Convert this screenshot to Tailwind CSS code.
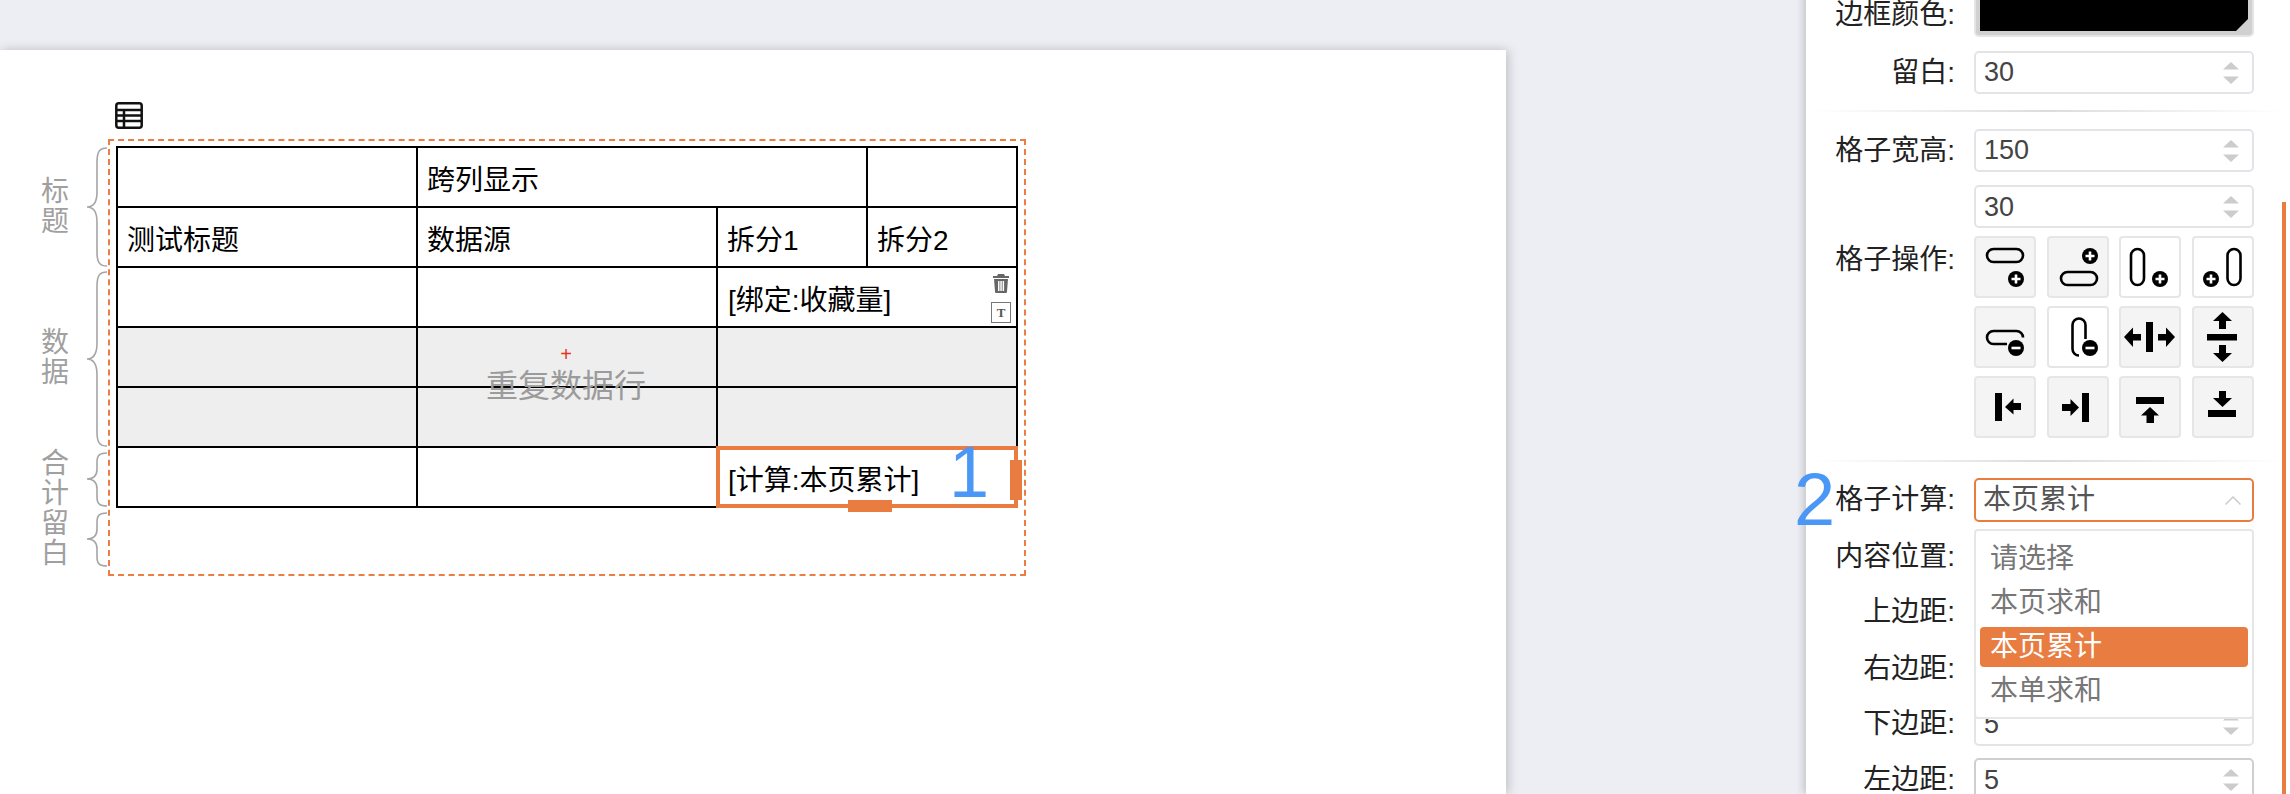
<!DOCTYPE html>
<html lang="zh-CN">
<head>
  <meta charset="UTF-8" />
  <title>报表设计</title>
  <script src="https://cdn.jsdelivr.net/npm/@tailwindcss/browser@4"></script>
</head>
<body class="bg-[#eceef3] h-[794px] overflow-hidden font-['Liberation_Sans','Noto_Sans_CJK_SC',sans-serif]">
<div class="flex h-[794px] relative overflow-hidden">

  <!-- 画布 -->
  <main class="w-[1506px] mt-[50px] bg-white shadow-[2px_0_10px_rgba(0,0,0,0.2)] shrink-0">
    <div class="pl-[115px] pt-[52px] h-[29px] box-content">
      <svg class="w-[28px] h-[27px]" viewBox="0 0 28 27" fill="none" stroke="#111" stroke-width="2.5">
        <rect x="1.3" y="1.3" width="25.4" height="24.4" rx="2.5"/>
        <path d="M1 8h26M1 13.500h26M1 19h26M9 8v18"/>
      </svg>
    </div>

    <div class="flex items-start mt-[8px]">
      <!-- 分区标注 -->
      <div class="w-[108px] mt-[8px] text-[#a0a0a0] text-[28px] leading-[30px] text-center">
        <div class="flex items-center h-[120px]">
          <div class="w-[86px] pl-[24px]">标<br>题</div>
          <svg class="w-[22px] h-[120px]" viewBox="0 0 22 120" fill="none" stroke="#a5a5a5" stroke-width="1.6">
            <path d="M21 1C14 1 11 4 11 15V45C11 55 7 60 1 60C7 60 11 65 11 75V105C11 116 14 119 21 119"/>
          </svg>
        </div>
        <div class="flex items-center h-[180px] pt-[4px]">
          <div class="w-[86px] pl-[24px] -mt-[2px]">数<br>据</div>
          <svg class="w-[22px] h-[176px]" viewBox="0 0 22 176" fill="none" stroke="#a5a5a5" stroke-width="1.6">
            <path d="M21 1C14 1 11 4 11 15V72C11 83 7 88 1 88C7 88 11 93 11 104V161C11 172 14 175 21 175"/>
          </svg>
        </div>
        <div class="flex items-center h-[60px] pt-[5px]">
          <div class="w-[86px] pl-[24px] -mt-[1px]">合<br>计</div>
          <svg class="w-[22px] h-[55px]" viewBox="0 0 22 55" fill="none" stroke="#a5a5a5" stroke-width="1.6">
            <path d="M21 1C14 1 11 3 11 10V17C11 24 7 27 1 27C7 27 11 30 11 37V45C11 52 14 54 21 54"/>
          </svg>
        </div>
        <div class="flex items-center h-[60px] pt-[5px]">
          <div class="w-[86px] pl-[24px] -mt-[1px]">留<br>白</div>
          <svg class="w-[22px] h-[55px]" viewBox="0 0 22 55" fill="none" stroke="#a5a5a5" stroke-width="1.6">
            <path d="M21 1C14 1 11 3 11 10V17C11 24 7 27 1 27C7 27 11 30 11 37V45C11 52 14 54 21 54"/>
          </svg>
        </div>
      </div>

      <!-- 表格 -->
      <div class="border-2 border-dashed border-[#ec7d43] w-[918px] h-[437px] pl-[6px] pt-[5px]">
        <div class="relative w-[902px]">
          <table class="table-fixed border-collapse w-[902px] text-[28px] leading-[36px] text-black">
            <colgroup>
              <col class="w-[300px]"><col class="w-[300px]"><col class="w-[150px]"><col class="w-[150px]">
            </colgroup>
            <tbody>
              <tr class="h-[60px]">
                <td class="border-2 border-black"></td>
                <td colspan="2" class="border-2 border-black pl-[9px] pt-[8px]">跨列显示</td>
                <td class="border-2 border-black"></td>
              </tr>
              <tr class="h-[60px]">
                <td class="border-2 border-black pl-[9px] pt-[8px]">测试标题</td>
                <td class="border-2 border-black pl-[9px] pt-[8px]">数据源</td>
                <td class="border-2 border-black pl-[9px] pt-[8px]">拆分1</td>
                <td class="border-2 border-black pl-[9px] pt-[8px]">拆分2</td>
              </tr>
              <tr class="h-[60px]">
                <td class="border-2 border-black"></td>
                <td class="border-2 border-black"></td>
                <td colspan="2" class="border-2 border-black pl-[10px] pt-[8px] relative">
                  [绑定:收藏量]
                  <div class="absolute right-[5px] top-[6px] flex flex-col items-center gap-[9px]">
                    <svg class="w-[18px] h-[19px]" viewBox="0 0 18 19" fill="#666">
                      <path d="M6 0h6l1 2h4v2H1V2h4zM2 5h14l-1 12.500c0 1-.6 1.500-1.500 1.500h-9C3.600 19 3 18.500 3 17.500zM6 7v10h1.500V7zM8.300 7v10h1.500V7zM10.600 7v10h1.500V7z" fill-rule="evenodd"/>
                    </svg>
                    <div class="w-[20px] h-[21px] border border-[#777] text-[#555] text-[13px] leading-[19px] text-center font-['Liberation_Serif',serif] font-bold">T</div>
                  </div>
                </td>
              </tr>
              <tr class="h-[60px] bg-[#eeeeee]">
                <td class="border-2 border-black"></td>
                <td class="border-2 border-black"></td>
                <td colspan="2" class="border-2 border-black"></td>
              </tr>
              <tr class="h-[60px] bg-[#eeeeee]">
                <td class="border-2 border-black"></td>
                <td class="border-2 border-black"></td>
                <td colspan="2" class="border-2 border-black"></td>
              </tr>
              <tr class="h-[60px]">
                <td class="border-2 border-black"></td>
                <td class="border-2 border-black"></td>
                <td colspan="2" class="border-2 border-black pl-[10px] pt-[8px] relative">
                  [计算:本页累计]
                  <div class="absolute -inset-[2px] border-4 border-[#e97c41]">
                    <div class="absolute right-[-8px] top-[10px] w-[12px] h-[40px] bg-[#e97c41]"></div>
                    <div class="absolute bottom-[-8px] left-[128px] w-[44px] h-[12px] bg-[#e97c41]"></div>
                  </div>
                </td>
              </tr>
            </tbody>
          </table>
          <!-- 重复数据行 -->
          <div class="absolute left-0 top-[181px] w-[900px] h-[120px] flex flex-col items-center pt-[17px] text-[#9b9b9b] text-[32px] leading-[40px]">
            <span class="text-[#e8321e] text-[20px] leading-[20px]">+</span>
            <span class="mt-[2px]">重复数据行</span>
          </div>
          <span class="absolute left-[833px] top-[290px] text-[#4a97f5] text-[72px] leading-[72px]">1</span>
        </div>
      </div>
    </div>
  </main>

  <div class="w-[300px] shrink-0"></div>

  <!-- 属性面板 -->
  <aside class="w-[484px] shrink-0 bg-white shadow-[-2px_0_8px_rgba(0,0,0,0.2)] -mt-[7px] text-[28px] text-[#222]">
    <div class="flex items-center h-[44px]">
      <label class="w-[149px] text-right mr-[19px] leading-[36px]">边框颜色:</label>
      <div class="w-[280px] h-[44px] border-2 border-[#e4e4e8] rounded-[5px] p-[4px] relative bg-[#d0d0d0]">
        <div class="h-full bg-black"></div>
        <div class="absolute right-[4px] bottom-[4px] w-0 h-0 border-l-[12px] border-l-transparent border-b-[12px] border-b-[#d0d0d0]"></div>
      </div>
    </div>

    <div class="flex items-center h-[43px] mt-[14px]">
      <label class="w-[149px] text-right mr-[19px] leading-[36px]">留白:</label>
      <div class="w-[280px] h-[43px] border-2 border-[#e4e4e8] rounded-[5px] pl-[8px] flex items-center justify-between text-[#444]">
        <span class="text-[27px]">30</span>
        <svg class="w-[16px] h-[22px] mr-[13px]" viewBox="0 0 16 22" fill="#ccc"><path d="M8 0l8 7.500H0zM0 14.500h16L8 22z"/></svg>
      </div>
    </div>

    <div class="h-[2px] mt-[16px] mx-[8px] bg-gradient-to-r from-transparent via-[#dcdce0] to-transparent"></div>

    <div class="flex items-center h-[43px] mt-[17px]">
      <label class="w-[149px] text-right mr-[19px] leading-[36px]">格子宽高:</label>
      <div class="w-[280px] h-[43px] border-2 border-[#e4e4e8] rounded-[5px] pl-[8px] flex items-center justify-between text-[#444]">
        <span class="text-[27px]">150</span>
        <svg class="w-[16px] h-[22px] mr-[13px]" viewBox="0 0 16 22" fill="#ccc"><path d="M8 0l8 7.500H0zM0 14.500h16L8 22z"/></svg>
      </div>
    </div>

    <div class="flex items-center h-[43px] mt-[13px]">
      <div class="w-[149px] mr-[19px]"></div>
      <div class="w-[280px] h-[43px] border-2 border-[#e4e4e8] rounded-[5px] pl-[8px] flex items-center justify-between text-[#444]">
        <span class="text-[27px] pt-[1px]">30</span>
        <svg class="w-[16px] h-[22px] mr-[13px]" viewBox="0 0 16 22" fill="#ccc"><path d="M8 0l8 7.500H0zM0 14.500h16L8 22z"/></svg>
      </div>
    </div>

    <!-- 格子操作 -->
    <div class="flex items-start mt-[8px]">
      <label class="w-[149px] text-right mr-[19px] leading-[48px]">格子操作:</label>
      <div class="w-[280px] grid grid-cols-[62px_62px_62px_62px] justify-between gap-y-[8px]">
        <button class="w-[62px] h-[62px] border-2 border-[#e6e6e6] rounded-[4px] bg-[#f4f4f4]">
          <svg class="-m-[2px]" width="62" height="62" viewBox="0 0 62 62">
            <rect x="13" y="13" width="36" height="13" rx="6.500" fill="none" stroke="#000" stroke-width="2.600"/>
            <circle cx="42" cy="43" r="8" fill="#000"/><path d="M37.500 43h9M42 38.500v9" stroke="#fff" stroke-width="2.600"/>
          </svg>
        </button>
        <button class="w-[62px] h-[62px] border-2 border-[#e6e6e6] rounded-[4px] bg-[#f4f4f4]">
          <svg class="-m-[2px]" width="62" height="62" viewBox="0 0 62 62">
            <rect x="14" y="36" width="36" height="13" rx="6.500" fill="none" stroke="#000" stroke-width="2.600"/>
            <circle cx="43" cy="20" r="8" fill="#000"/><path d="M38.500 20h9M43 15.500v9" stroke="#fff" stroke-width="2.600"/>
          </svg>
        </button>
        <button class="w-[62px] h-[62px] border-2 border-[#e6e6e6] rounded-[4px] bg-white">
          <svg class="-m-[2px]" width="62" height="62" viewBox="0 0 62 62">
            <rect x="12" y="13" width="13" height="36" rx="6.500" fill="none" stroke="#000" stroke-width="2.600"/>
            <circle cx="41" cy="43" r="8" fill="#000"/><path d="M36.500 43h9M41 38.500v9" stroke="#fff" stroke-width="2.600"/>
          </svg>
        </button>
        <button class="w-[62px] h-[62px] border-2 border-[#e6e6e6] rounded-[4px] bg-white">
          <svg class="-m-[2px]" width="62" height="62" viewBox="0 0 62 62">
            <rect x="35.500" y="13" width="13" height="36" rx="6.500" fill="none" stroke="#000" stroke-width="2.600"/>
            <circle cx="19" cy="43" r="8" fill="#000"/><path d="M14.500 43h9M19 38.500v9" stroke="#fff" stroke-width="2.600"/>
          </svg>
        </button>

        <button class="w-[62px] h-[62px] border-2 border-[#e6e6e6] rounded-[4px] bg-[#f4f4f4]">
          <svg class="-m-[2px]" width="62" height="62" viewBox="0 0 62 62">
            <path d="M33 38H19.500a6.500 6.500 0 0 1 0-13h23a6.500 6.500 0 0 1 6.500 6.500" fill="none" stroke="#000" stroke-width="2.600"/>
            <circle cx="42" cy="42" r="8" fill="#000"/><path d="M37.500 42h9" stroke="#fff" stroke-width="2.600"/>
          </svg>
        </button>
        <button class="w-[62px] h-[62px] border-2 border-[#e6e6e6] rounded-[4px] bg-white">
          <svg class="-m-[2px]" width="62" height="62" viewBox="0 0 62 62">
            <path d="M38.500 33V19a6.500 6.500 0 0 0-13 0v24a6.500 6.500 0 0 0 6.500 6.500" fill="none" stroke="#000" stroke-width="2.600"/>
            <circle cx="43" cy="42" r="8" fill="#000"/><path d="M38.500 42h9" stroke="#fff" stroke-width="2.600"/>
          </svg>
        </button>
        <button class="w-[62px] h-[62px] border-2 border-[#e6e6e6] rounded-[4px] bg-[#f4f4f4]">
          <svg class="-m-[2px]" width="62" height="62" viewBox="0 0 62 62">
            <path d="M27 16h7v30h-7zM5 31l9-9.500V28h8v6.500h-8V41zM56 31l-9-9.500V28h-8v6.500h8V41z"/>
          </svg>
        </button>
        <button class="w-[62px] h-[62px] border-2 border-[#e6e6e6] rounded-[4px] bg-[#f4f4f4]">
          <svg class="-m-[2px]" width="62" height="62" viewBox="0 0 62 62">
            <path d="M15 28h30v6.500H15zM30.500 6l9.500 9h-6v8h-7v-8h-6zM30.500 56l9.500-9h-6v-8h-7v8h-6z"/>
          </svg>
        </button>

        <button class="w-[62px] h-[62px] border-2 border-[#e6e6e6] rounded-[4px] bg-[#f4f4f4]">
          <svg class="-m-[2px]" width="62" height="62" viewBox="0 0 62 62">
            <path d="M21 17h7v28h-7zM31 31l8.500-8.500V27H47v7h-7.500v4.500z"/>
          </svg>
        </button>
        <button class="w-[62px] h-[62px] border-2 border-[#e6e6e6] rounded-[4px] bg-[#f4f4f4]">
          <svg class="-m-[2px]" width="62" height="62" viewBox="0 0 62 62">
            <path d="M35 17h7v29h-7zM32 31.500l-8.500-8.500v5H15v7h8.500v5z"/>
          </svg>
        </button>
        <button class="w-[62px] h-[62px] border-2 border-[#e6e6e6] rounded-[4px] bg-[#f4f4f4]">
          <svg class="-m-[2px]" width="62" height="62" viewBox="0 0 62 62">
            <path d="M17 21h28v7H17zM31 31l9 8.500h-5V47h-7.500v-7.500H22z"/>
          </svg>
        </button>
        <button class="w-[62px] h-[62px] border-2 border-[#e6e6e6] rounded-[4px] bg-[#f4f4f4]">
          <svg class="-m-[2px]" width="62" height="62" viewBox="0 0 62 62">
            <path d="M16 34h28v7H16zM30.500 31l-9.500-9h6v-7h7v7h6z"/>
          </svg>
        </button>
      </div>
    </div>

    <div class="h-[2px] mt-[22px] mx-[8px] bg-gradient-to-r from-transparent via-[#dcdce0] to-transparent"></div>

    <!-- 格子计算 -->
    <div class="flex items-center h-[44px] mt-[16px] relative z-10">
      <label class="w-[149px] text-right mr-[19px] leading-[36px]">格子计算:</label>
      <div class="relative w-[280px] h-[44px] border-2 border-[#e97c41] rounded-[5px] pl-[7px] flex items-center justify-between text-[#555]">
        <span>本页累计</span>
        <svg class="w-[16px] h-[9px] mr-[11px]" viewBox="0 0 16 9" fill="none" stroke="#ccc" stroke-width="1.500"><path d="M0.500 8.500L8 1l7.500 7.500"/></svg>
        <div class="absolute -left-[2px] top-[49px] w-[280px] h-[190px] border-2 border-[#e6e6e6] rounded-[4px] bg-white px-[4px] pt-[8px] text-[#777] leading-[40px] flex flex-col gap-[4px]">
          <div class="h-[40px] pl-[10px]">请选择</div>
          <div class="h-[40px] pl-[10px]">本页求和</div>
          <div class="h-[40px] pl-[10px] bg-[#e97c41] text-white rounded-[4px]">本页累计</div>
          <div class="h-[40px] pl-[10px]">本单求和</div>
        </div>
      </div>
    </div>

    <div class="flex items-center h-[44px] mt-[12px] pt-[1px]">
      <label class="w-[149px] text-right mr-[19px] leading-[36px]">内容位置:</label>
    </div>
    <div class="flex items-center h-[44px] mt-[12px]">
      <label class="w-[149px] text-right mr-[19px] leading-[36px]">上边距:</label>
    </div>
    <div class="flex items-center h-[44px] mt-[12px] pt-[1px]">
      <label class="w-[149px] text-right mr-[19px] leading-[36px]">右边距:</label>
    </div>
    <div class="flex items-center h-[44px] mt-[12px]">
      <label class="w-[149px] text-right mr-[19px] leading-[36px]">下边距:</label>
      <div class="w-[280px] h-[44px] border-2 border-[#e4e4e8] rounded-[5px] pl-[8px] flex items-center justify-between text-[#444]">
        <span class="text-[27px]">5</span>
        <svg class="w-[16px] h-[22px] mr-[13px]" viewBox="0 0 16 22" fill="#ccc"><path d="M8 0l8 7.500H0zM0 14.500h16L8 22z"/></svg>
      </div>
    </div>
    <div class="flex items-center h-[44px] mt-[12px]">
      <label class="w-[149px] text-right mr-[19px] leading-[36px]">左边距:</label>
      <div class="w-[280px] h-[44px] border-2 border-[#cfcfd2] rounded-[5px] pl-[8px] flex items-center justify-between text-[#444]">
        <span class="text-[27px]">5</span>
        <svg class="w-[16px] h-[22px] mr-[13px]" viewBox="0 0 16 22" fill="#ccc"><path d="M8 0l8 7.500H0zM0 14.500h16L8 22z"/></svg>
      </div>
    </div>
  </aside>

  <!-- 滚动条 / 标注 -->
  <div class="absolute left-[2282px] top-[202px] bottom-0 w-[4px] bg-[#e97c41]"></div>
  <span class="absolute left-[1794px] top-[464px] text-[#4a97f5] text-[74px] leading-[72px] font-['Liberation_Sans',sans-serif]">2</span>
</div>
</body>
</html>
